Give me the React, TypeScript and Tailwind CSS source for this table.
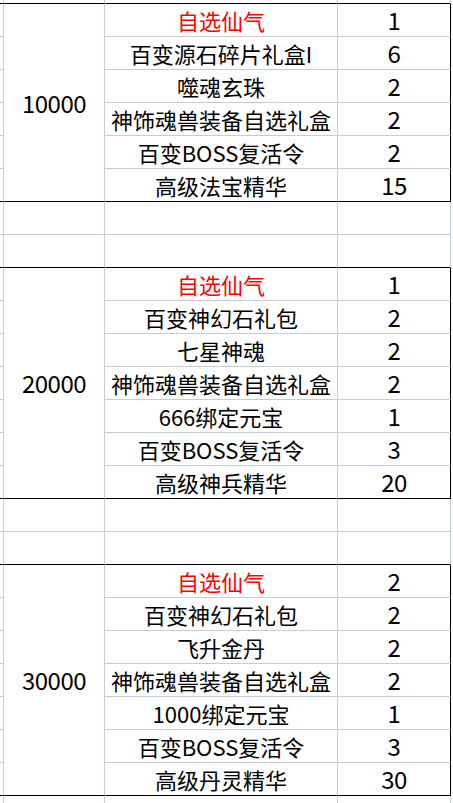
import React from "react";

type Item = { name: string; count: number; red?: boolean };
type Block = { amount: string; items: Item[] };

const blocks: Block[] = [
  {
    amount: "10000",
    items: [
      { name: "自选仙气", count: 1, red: true },
      { name: "百变源石碎片礼盒I", count: 6 },
      { name: "噬魂玄珠", count: 2 },
      { name: "神饰魂兽装备自选礼盒", count: 2 },
      { name: "百变BOSS复活令", count: 2 },
      { name: "高级法宝精华", count: 15 },
    ],
  },
  {
    amount: "20000",
    items: [
      { name: "自选仙气", count: 1, red: true },
      { name: "百变神幻石礼包", count: 2 },
      { name: "七星神魂", count: 2 },
      { name: "神饰魂兽装备自选礼盒", count: 2 },
      { name: "666绑定元宝", count: 1 },
      { name: "百变BOSS复活令", count: 3 },
      { name: "高级神兵精华", count: 20 },
    ],
  },
  {
    amount: "30000",
    items: [
      { name: "自选仙气", count: 2, red: true },
      { name: "百变神幻石礼包", count: 2 },
      { name: "飞升金丹", count: 2 },
      { name: "神饰魂兽装备自选礼盒", count: 2 },
      { name: "1000绑定元宝", count: 1 },
      { name: "百变BOSS复活令", count: 3 },
      { name: "高级丹灵精华", count: 30 },
    ],
  },
];

const gray = "border-[#c6cbd9]";
const cellText = "flex items-center justify-center whitespace-nowrap leading-none";

function EmptyRow({ last }: { last: boolean }) {
  const b = last ? "border-b-black" : "border-b-[#c6cbd9]";
  return (
    <>
      <div className={`border-r border-b ${gray} ${b}`} />
      <div className={`border-r border-b ${gray} ${b}`} />
      <div className={`border-r border-b ${gray} ${b}`} />
      <div className={`border-r border-b ${gray} ${b}`} />
      <div />
    </>
  );
}

function BlockRows({ block }: { block: Block }) {
  const n = block.items.length;
  return (
    <>
      {block.items.map((it, i) => {
        const last = i === n - 1;
        const b = last ? "border-b-black" : "border-b-[#c6cbd9]";
        return (
          <React.Fragment key={i}>
            <div className={`border-r border-b ${gray} ${b}`} />
            {i === 0 && (
              <div
                className={`${n === 6 ? "row-span-6" : "row-span-7"} border-r border-b ${gray} border-b-black ${cellText} text-[24px] tracking-[-0.5px] text-black`}
              >
                {block.amount}
              </div>
            )}
            <div className={`border-r border-b ${gray} ${b} ${cellText} text-[22px] ${it.red ? "text-[#ff0000]" : "text-black"}`}>
              {it.name}
            </div>
            <div className={`border-r border-b border-r-black ${b} ${cellText} text-[24px] tracking-[-0.5px] text-black`}>
              {it.count}
            </div>
            <div />
          </React.Fragment>
        );
      })}
    </>
  );
}

export default function App() {
  return (
    <div
      className="w-[453px] h-[803px] overflow-hidden bg-white"
      style={{ fontFamily: '"Noto Sans CJK SC", "Noto Sans", sans-serif' }}
    >
      <div className="grid grid-cols-[4px_101px_233px_113px_2px] grid-rows-[4px_repeat(24,33px)_7px]">
        {/* top strip */}
        <div className={`border-r border-b ${gray} border-b-black`} />
        <div className={`border-r border-b ${gray} border-b-black`} />
        <div className={`border-r border-b ${gray} border-b-black`} />
        <div className={`border-r border-b ${gray} border-b-black`} />
        <div />

        <BlockRows block={blocks[0]} />
        <EmptyRow last={false} />
        <EmptyRow last={true} />
        <BlockRows block={blocks[1]} />
        <EmptyRow last={false} />
        <EmptyRow last={true} />
        <BlockRows block={blocks[2]} />

        {/* bottom strip */}
        <div className={`border-r ${gray}`} />
        <div className={`border-r ${gray}`} />
        <div className={`border-r ${gray}`} />
        <div className={`border-r ${gray}`} />
        <div />
      </div>
    </div>
  );
}
